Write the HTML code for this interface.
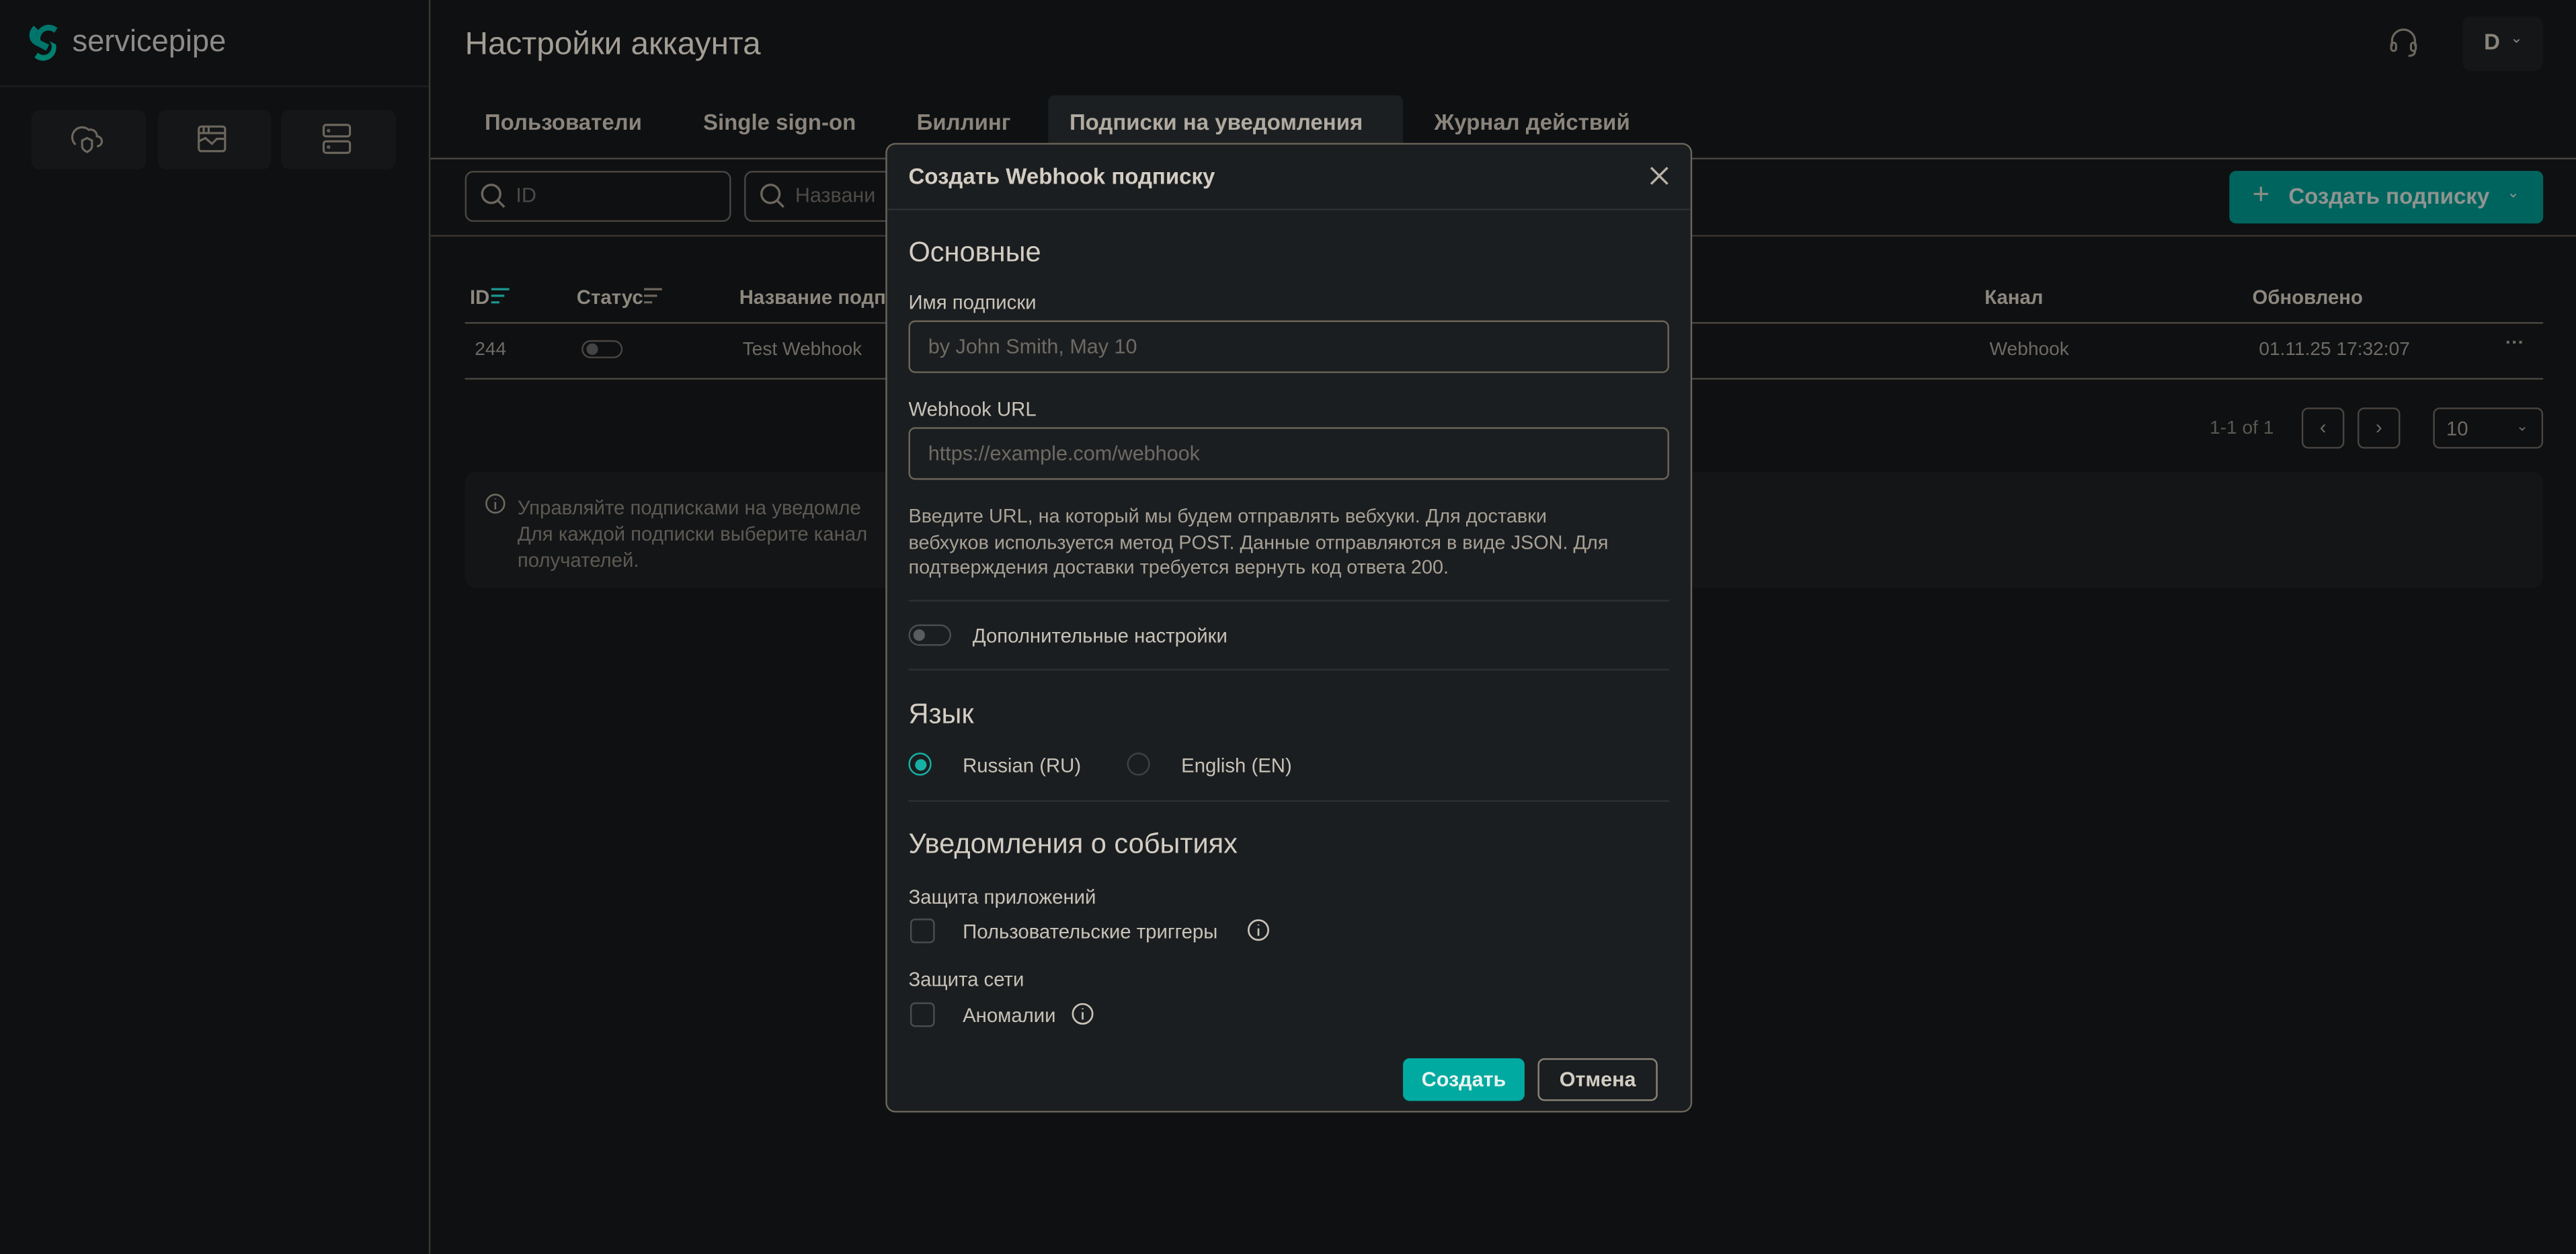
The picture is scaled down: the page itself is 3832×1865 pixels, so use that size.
<!DOCTYPE html>
<html><head><meta charset="utf-8">
<style>
html,body{margin:0;padding:0;background:#0e1012;overflow:hidden;width:3832px;height:1864px}
#w{position:absolute;left:0;top:0;width:1568px;height:763px;transform:scale(2.44388);transform-origin:0 0;font-family:"Liberation Sans","DejaVu Sans",sans-serif;color:#a8a196}
.a{position:absolute;white-space:nowrap}
.ln{position:absolute;height:1px}
.ib{position:absolute;background:#141618;border-radius:5px}
.tab{position:absolute;top:67px;font-size:13.5px;font-weight:bold;color:#8a847b}
.th{position:absolute;top:174px;font-size:12px;font-weight:bold;color:#8d877e}
.td{position:absolute;top:207px;font-size:11.5px;color:#6f6a63}
.m{position:absolute;left:539px;top:87px;width:489px;height:588px;background:#1b1e20;border:1px solid #6b6459;border-radius:6px}
.mt{position:absolute;color:#d3cdc3}
.h2{font-size:17px}
.lb{font-size:12px;color:#c8c2b8}
.inp{position:absolute;left:13px;width:463px;height:32px;border:1px solid #6b6459;border-radius:4px;box-sizing:border-box;font-size:12.5px;color:#6f6a63;padding:8px 11px}
.dv{position:absolute;left:13px;width:463px;height:1px;background:#2c3033}
.cb{position:absolute;left:14px;width:13px;height:13px;border:1px solid #4a4d50;border-radius:3px}
</style></head><body><div id="w">
<div style="position:absolute;left:261px;top:0;width:1px;height:763px;background:#3a3631"></div>
<div class="ln" style="left:0;top:52px;width:261px;background:#1c1e20"></div>
<svg class="a" style="left:17px;top:12px" width="22" height="28" viewBox="0 0 22 28"><path d="M18 5 A8 8 0 0 0 5 13 L9 15 A4 4 0 0 1 16 8 Z" fill="#00756b"/><path d="M4 23 A8 8 0 0 0 17 15 L13 13 A4 4 0 0 1 6 20 Z" fill="#00806f"/><path d="M5 5 C2 8 2 12 6 14 L12 17" stroke="#00756b" stroke-width="4" fill="none"/></svg>
<div class="a" style="left:44px;top:14px;font-size:18.5px;color:#8d8a87">servicepipe</div>
<div class="ib" style="left:19px;top:67px;width:70px;height:36px"></div>
<div class="ib" style="left:96px;top:67px;width:69px;height:36px"></div>
<div class="ib" style="left:171px;top:67px;width:70px;height:36px"></div>
<svg class="a" style="left:43px;top:75px" width="20" height="20" viewBox="0 0 20 20" fill="none" stroke="#6c665d" stroke-width="1.3"><path d="M3 13 A5 5 0 0 1 11 4 A4 4 0 0 1 16 8 A3 3 0 0 1 16 14"/><path d="M10 9 L13 10.5 V14 Q13 16 10 17.5 Q7 16 7 14 V10.5 Z"/></svg>
<svg class="a" style="left:120px;top:76px" width="18" height="17" viewBox="0 0 18 17" fill="none" stroke="#6c665d" stroke-width="1.3"><rect x="1" y="1" width="16" height="15" rx="1.5"/><path d="M1 5 H17 M4 1 V5 M7 1V5 M1 10 L5 8 L9 11.5 L12 8.5 H17"/></svg>
<svg class="a" style="left:196px;top:75px" width="18" height="19" viewBox="0 0 18 19" fill="none" stroke="#6c665d" stroke-width="1.3"><rect x="1" y="1" width="16" height="7" rx="1.5"/><rect x="1" y="11" width="16" height="7" rx="1.5"/><circle cx="4" cy="4.5" r=".4"/><circle cx="4" cy="14.5" r=".4"/></svg>
<div class="a" style="left:283px;top:16px;font-size:19.5px;color:#a39d94">Настройки аккаунта</div>
<svg class="a" style="left:1454px;top:16px" width="18" height="20" viewBox="0 0 18 20" fill="none" stroke="#6c665d" stroke-width="1.3"><path d="M2 12 V9 A7 7 0 0 1 16 9 V12"/><rect x="1.5" y="10" width="3" height="5" rx="1.5"/><rect x="13.5" y="10" width="3" height="5" rx="1.5"/><path d="M16 15 Q16 18 12 18"/></svg>
<div class="ib" style="left:1499px;top:10px;width:49px;height:33px"></div>
<div class="a" style="left:1512px;top:18px;font-size:13.5px;font-weight:bold;color:#8a847b">D</div>
<div class="a" style="left:1528px;top:18px;font-size:9px;color:#8a847b">&#8964;</div>
<div style="position:absolute;left:638px;top:58px;width:216px;height:38px;background:#1c1f21;border-radius:4px 4px 0 0"></div>
<div class="tab" style="left:295px">Пользователи</div>
<div class="tab" style="left:428px">Single sign-on</div>
<div class="tab" style="left:558px">Биллинг</div>
<div class="tab" style="left:651px;color:#b0aaa0">Подписки на уведомления</div>
<div class="tab" style="left:873px">Журнал действий</div>
<div class="ln" style="left:262px;top:96px;width:1306px;background:#4a4540"></div>
<div style="position:absolute;left:283px;top:104px;width:162px;height:31px;border:1px solid #4a4540;border-radius:5px;box-sizing:border-box"></div>
<div style="position:absolute;left:453px;top:104px;width:100px;height:31px;border:1px solid #4a4540;border-radius:5px;box-sizing:border-box"></div>
<svg class="a" style="left:292px;top:111px" width="16" height="16" viewBox="0 0 16 16" fill="none" stroke="#6c665d" stroke-width="1.4"><circle cx="7" cy="7" r="5.5"/><path d="M11 11 L15 15"/></svg>
<svg class="a" style="left:462px;top:111px" width="16" height="16" viewBox="0 0 16 16" fill="none" stroke="#6c665d" stroke-width="1.4"><circle cx="7" cy="7" r="5.5"/><path d="M11 11 L15 15"/></svg>
<div class="a" style="left:314px;top:112px;font-size:12.5px;color:#4e4a45">ID</div>
<div class="a" style="left:484px;top:112px;font-size:12.5px;color:#4e4a45">Названи</div>
<div style="position:absolute;left:1357px;top:104px;width:191px;height:32px;background:#00645e;border-radius:4px"></div>
<div class="a" style="left:1371px;top:108px;font-size:18px;color:#8a8c86">+</div>
<div class="a" style="left:1393px;top:112px;font-size:13.5px;font-weight:bold;color:#8e9490">Создать подписку</div>
<div class="a" style="left:1526px;top:112px;font-size:9px;color:#8e9490">&#8964;</div>
<div class="ln" style="left:262px;top:143px;width:1306px;background:#3a3631"></div>
<div class="th" style="left:286px">ID</div>
<svg class="a" style="left:299px;top:175px" width="12" height="10"><path d="M0 1H11M0 5H8M0 9H5" stroke="#1a9a92" stroke-width="1.3"/></svg>
<div class="th" style="left:351px">Статус</div>
<svg class="a" style="left:392px;top:175px" width="12" height="10"><path d="M0 1H11M0 5H8M0 9H5" stroke="#6c665d" stroke-width="1.3"/></svg>
<div class="th" style="left:450px">Название подп</div>
<div class="th" style="left:1208px">Канал</div>
<div class="th" style="left:1371px">Обновлено</div>
<div class="ln" style="left:283px;top:196px;width:1265px;background:#4a4540"></div>
<div class="td" style="left:289px">244</div>
<div style="position:absolute;left:354px;top:207px;width:25px;height:11px;border:1px solid #4a4540;border-radius:6px;box-sizing:border-box"></div>
<div style="position:absolute;left:357px;top:209px;width:7px;height:7px;border-radius:50%;background:#444"></div>
<div class="td" style="left:452px">Test Webhook</div>
<div class="td" style="left:1211px">Webhook</div>
<div class="td" style="left:1375px">01.11.25 17:32:07</div>
<div class="td" style="left:1525px;top:203px;font-weight:bold">···</div>
<div class="ln" style="left:283px;top:230px;width:1265px;background:#4a4540"></div>
<div class="a" style="left:1345px;top:255px;font-size:11.5px;color:#5c5750">1-1 of 1</div>
<div style="position:absolute;left:1401px;top:248px;width:26px;height:25px;border:1px solid #4a4540;border-radius:4px;box-sizing:border-box;text-align:center;font-size:12px;line-height:23px;color:#6f6a63">‹</div>
<div style="position:absolute;left:1435px;top:248px;width:26px;height:25px;border:1px solid #4a4540;border-radius:4px;box-sizing:border-box;text-align:center;font-size:12px;line-height:23px;color:#6f6a63">›</div>
<div style="position:absolute;left:1481px;top:248px;width:67px;height:25px;border:1px solid #4a4540;border-radius:4px;box-sizing:border-box;font-size:12px;line-height:25px;color:#6f6a63;padding-left:7px">10<span style="position:absolute;right:8px;top:-2px;font-size:9px">&#8964;</span></div>
<div style="position:absolute;left:283px;top:287px;width:1265px;height:71px;background:#131517;border-radius:7px"></div>
<svg class="a" style="left:295px;top:300px" width="13" height="13" viewBox="0 0 13 13" fill="none" stroke="#6c665d" stroke-width="1.1"><circle cx="6.5" cy="6.5" r="5.5"/><path d="M6.5 5.5V10M6.5 3.3V3.8"/></svg>
<div class="a" style="left:315px;top:301px;font-size:12px;line-height:16px;color:#5e5a53">Управляйте подписками на уведомле<br>Для каждой подписки выберите канал<br>получателей.</div>
<div class="m">
 <div class="mt" style="left:13px;top:12px;font-size:13.5px;font-weight:bold">Создать Webhook подписку</div>
 <svg class="a" style="left:464px;top:13px" width="12" height="12"><path d="M1 1L11 11M11 1L1 11" stroke="#b8b2a8" stroke-width="1.4"/></svg>
 <div class="ln" style="left:0;top:39px;width:489px;background:#2c3033"></div>
 <div class="mt h2" style="left:13px;top:56px">Основные</div>
 <div class="mt lb" style="left:13px;top:89px">Имя подписки</div>
 <div class="inp" style="top:107px">by John Smith, May 10</div>
 <div class="mt lb" style="left:13px;top:154px">Webhook URL</div>
 <div class="inp" style="top:172px">https://example.com/webhook</div>
 <div class="mt" style="left:13px;top:219px;font-size:11.8px;line-height:15.5px;color:#a8a196;white-space:nowrap">Введите URL, на который мы будем отправлять вебхуки. Для доставки<br>вебхуков используется метод POST. Данные отправляются в виде JSON. Для<br>подтверждения доставки требуется вернуть код ответа 200.</div>
 <div class="dv" style="top:277px"></div>
 <div style="position:absolute;left:13px;top:292px;width:26px;height:13px;border:1px solid #4a4d50;border-radius:7px;box-sizing:border-box"></div>
 <div style="position:absolute;left:16px;top:295px;width:7px;height:7px;border-radius:50%;background:#5a5d60"></div>
 <div class="mt lb" style="left:52px;top:292px">Дополнительные настройки</div>
 <div class="dv" style="top:319px"></div>
 <div class="mt h2" style="left:13px;top:337px">Язык</div>
 <div style="position:absolute;left:13px;top:370px;width:14px;height:14px;border:1.3px solid #17b0a5;border-radius:50%;box-sizing:border-box"></div>
 <div style="position:absolute;left:16.5px;top:373.5px;width:7px;height:7px;border-radius:50%;background:#17b0a5"></div>
 <div class="mt lb" style="left:46px;top:371px">Russian (RU)</div>
 <div style="position:absolute;left:146px;top:370px;width:14px;height:14px;border:1px solid #3e4144;border-radius:50%;box-sizing:border-box"></div>
 <div class="mt lb" style="left:179px;top:371px">English (EN)</div>
 <div class="dv" style="top:399px"></div>
 <div class="mt h2" style="left:13px;top:416px">Уведомления о событиях</div>
 <div class="mt lb" style="left:13px;top:451px">Защита приложений</div>
 <div class="cb" style="top:471px"></div>
 <div class="mt lb" style="left:46px;top:472px">Пользовательские триггеры</div>
 <svg class="a" style="left:219px;top:471px" width="14" height="14" viewBox="0 0 14 14" fill="none" stroke="#c8c2b8" stroke-width="1.1"><circle cx="7" cy="7" r="6"/><path d="M7 6V10.5M7 3.6V4.2"/></svg>
 <div class="mt lb" style="left:13px;top:501px">Защита сети</div>
 <div class="cb" style="top:522px"></div>
 <div class="mt lb" style="left:46px;top:523px">Аномалии</div>
 <svg class="a" style="left:112px;top:522px" width="14" height="14" viewBox="0 0 14 14" fill="none" stroke="#c8c2b8" stroke-width="1.1"><circle cx="7" cy="7" r="6"/><path d="M7 6V10.5M7 3.6V4.2"/></svg>
 <div style="position:absolute;left:314px;top:556px;width:74px;height:26px;background:#00aaa0;border-radius:4px;color:#e8f4f2;font-size:12.5px;font-weight:bold;text-align:center;line-height:26px">Создать</div>
 <div style="position:absolute;left:396px;top:556px;width:73px;height:26px;border:1px solid #8a8378;border-radius:4px;box-sizing:border-box;color:#d3cdc3;font-size:12.5px;font-weight:bold;text-align:center;line-height:24px">Отмена</div>
</div>
</div></body></html>
